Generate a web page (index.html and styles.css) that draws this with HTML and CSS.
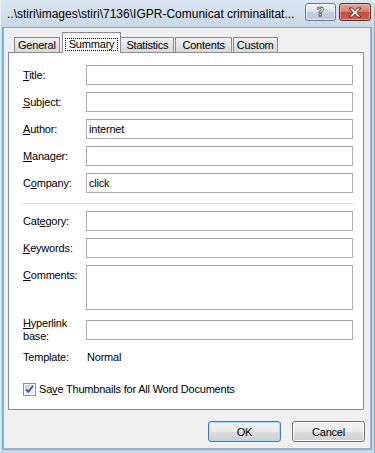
FILE: index.html
```html
<!DOCTYPE html>
<html>
<head>
<meta charset="utf-8">
<link rel="stylesheet" href="styles.css">
</head>
<body>
<div class="window">
  <div class="titlebar">
    <span class="title">..\stiri\images\stiri\7136\IGPR-Comunicat criminalitat...</span>
    <div class="caption-btns">
      <span class="cbtn help">?</span>
      <span class="cbtn close"><svg width="14" height="11" viewBox="0 0 14 11"><path d="M1 1 H4.5 L7 3.8 L9.5 1 H13 L9 5.5 L13 10 H9.5 L7 7.2 L4.5 10 H1 L5 5.5 Z" fill="#fff" stroke="#5a2a26" stroke-width="1" stroke-linejoin="round"/></svg></span>
    </div>
  </div>
  <div class="client">
    <div class="tabs">
      <span class="tab tab-narrow">General</span>
      <span class="tab selected"><span class="focus">Summary</span></span>
      <span class="tab tab-mid">Statistics</span>
      <span class="tab tab-wide">Contents</span>
      <span class="tab tab-narrow">Custom</span>
    </div>
    <div class="panel">
      <div class="row"><span class="label"><u>T</u>itle:</span><div class="field"></div></div>
      <div class="row"><span class="label"><u>S</u>ubject:</span><div class="field"></div></div>
      <div class="row"><span class="label"><u>A</u>uthor:</span><div class="field">internet</div></div>
      <div class="row"><span class="label"><u>M</u>anager:</span><div class="field"></div></div>
      <div class="row"><span class="label">C<u>o</u>mpany:</span><div class="field">click</div></div>
      <div class="separator"></div>
      <div class="row"><span class="label">Cat<u>e</u>gory:</span><div class="field"></div></div>
      <div class="row"><span class="label"><u>K</u>eywords:</span><div class="field"></div></div>
      <div class="row row-top"><span class="label"><u>C</u>omments:</span><div class="field field-tall"></div></div>
      <div class="row row-link"><span class="label label-2"><u>H</u>yperlink<br>base:</span><div class="field"></div></div>
      <div class="row"><span class="label">Template:</span><span class="value">Normal</span></div>
      <div class="check-row">
        <svg class="checkbox" width="13" height="13" viewBox="0 0 13 13">
          <defs><linearGradient id="cg" x1="0" y1="0" x2="1" y2="1"><stop offset="0" stop-color="#cbcfd5"/><stop offset="1" stop-color="#f6f6f6"/></linearGradient></defs>
          <rect x="0.5" y="0.5" width="12" height="12" fill="#fff" stroke="#8f8f8f"/>
          <rect x="2" y="2" width="9" height="9" fill="url(#cg)"/>
          <path d="M3 6.3 L5.3 8.8 L10 2.8" fill="none" stroke="#3d559c" stroke-width="1.8"/>
        </svg>
        <span>Sa<u>v</u>e Thumbnails for All Word Documents</span>
      </div>
    </div>
    <div class="buttons">
      <span class="btn default">OK</span>
      <span class="btn">Cancel</span>
    </div>
  </div>
</div>
</body>
</html>
```
FILE: styles.css
```css
* { box-sizing: border-box; }
html, body { margin: 0; padding: 0; }
body {
  width: 375px;
  height: 453px;
  overflow: hidden;
  font-family: "Liberation Sans", Arial, sans-serif;
  font-size: 11px;
  letter-spacing: -0.2px;
  color: #000;
}
.window {
  width: 375px;
  height: 453px;
  display: flex;
  flex-direction: column;
  background: linear-gradient(#dbe6f2, #c8d7e7 28px, #c8d7e7);
  border-top-right-radius: 7px;
  border-left: 1px solid #e4eef6;
  border-right: 1px solid #8fb4d6;
}
.titlebar {
  height: 28px;
  flex: none;
  display: flex;
  align-items: flex-start;
  padding-left: 6px;
}
.title {
  font-family: "Liberation Sans", Arial, sans-serif;
  font-size: 12px;
  letter-spacing: 0;
  line-height: 16px;
  margin-top: 6px;
  flex: 1;
  white-space: nowrap;
  overflow: hidden;
}
.caption-btns {
  display: flex;
  gap: 3px;
  margin-top: 3px;
  margin-right: 3px;
}
.cbtn {
  width: 31px;
  height: 18px;
  border-radius: 3px;
  display: flex;
  align-items: center;
  justify-content: center;
}
.help {
  border: 1px solid #6b7c92;
  background: linear-gradient(#eef3f9, #d7e1ec 50%, #c3d1e1 51%, #b9c9db);
  box-shadow: inset 0 0 0 1px rgba(255,255,255,0.6);
  font-family: "DejaVu Sans", sans-serif;
  font-weight: bold;
  font-size: 13px;
  color: #fff;
  -webkit-text-stroke: 0.8px #48556a;
  padding-bottom: 1px;
}
.close {
  width: 32px;
  border: 1px solid #6a2c25;
  background: linear-gradient(#e8a695, #d57d6b 50%, #c24d3a 51%, #c9614d);
  box-shadow: inset 0 0 0 1px rgba(255,220,210,0.45);
}
.client {
  flex: 1;
  margin: 0 3px 4px 2px;
  background: #f0f0f0;
  border-left: 1px solid #9fb3c8;
  border-right: 1px solid #9fb3c8;
  border-bottom: 1px solid #9fb3c8;
  box-shadow: 0 0 0 1px #62b6e6;
  padding: 4px 6px 0 4px;
  display: flex;
  flex-direction: column;
}
.tabs {
  height: 20px;
  display: flex;
  align-items: flex-end;
  padding-left: 6px;
}
.tab {
  height: 15px;
  border: 1px solid #898c95;
  border-bottom: none;
  background: linear-gradient(#f2f2f2, #e4e4e4 50%, #d9d9d9);
  padding: 0 4px;
  margin-right: 1px;
  line-height: 14px;
  position: relative;
}
.tab-narrow { padding: 0 3px; }
.tab-mid { padding: 0 5px; }
.tab-wide { padding: 0 6px; }
.tab.selected {
  height: 21px;
  margin: 0 -1px -1px 1px;
  background: #fff;
  z-index: 1;
  padding: 5px 2px 0;
  line-height: 11px;
}
.focus {
  display: inline-block;
  border: 1px dotted #000;
  padding: 0 3px;
  height: 13px;
}
.panel {
  background: #fff;
  border: 1px solid #898c95;
  padding: 12px 10px 10px 14px;
  display: flex;
  flex-direction: column;
  gap: 7px;
}
.row {
  display: grid;
  grid-template-columns: 63px 1fr;
  align-items: center;
  height: 20px;
}
.row-top { align-items: start; height: auto; }
.row-top .label { line-height: 20px; }
.row-link { margin-top: 3px; }
.label { line-height: 13px; }
.label-2 { margin: -3px 0; }
.label u, .check-row u { text-underline-offset: 1px; }
.field {
  height: 20px;
  border: 1px solid #abadb3;
  border-top-color: #a2a4ab;
  background: #fff;
  padding-left: 2px;
  line-height: 18px;
}
.field-tall { height: 45px; }
.value { padding-left: 1px; }
.separator {
  height: 1px;
  background: #d5dfe5;
  margin: 3px 0 0;
}
.check-row {
  display: flex;
  align-items: center;
  gap: 3px;
  height: 20px;
  margin-top: 5px;
}
.checkbox { flex: none; }
.buttons {
  display: flex;
  justify-content: flex-end;
  gap: 11px;
  margin-top: 11px;
  margin-right: -1px;
}
.btn {
  width: 73px;
  height: 21px;
  border: 1px solid #707070;
  border-radius: 3px;
  background: linear-gradient(#f2f2f2, #ebebeb 50%, #dddddd 51%, #cfcfcf);
  box-shadow: inset 0 0 0 1px #fcfcfc;
  display: flex;
  align-items: center;
  justify-content: center;
}
.btn.default {
  border-color: #3c7fb1;
  box-shadow: inset 0 0 0 1px #9fdcf5;
}
```
